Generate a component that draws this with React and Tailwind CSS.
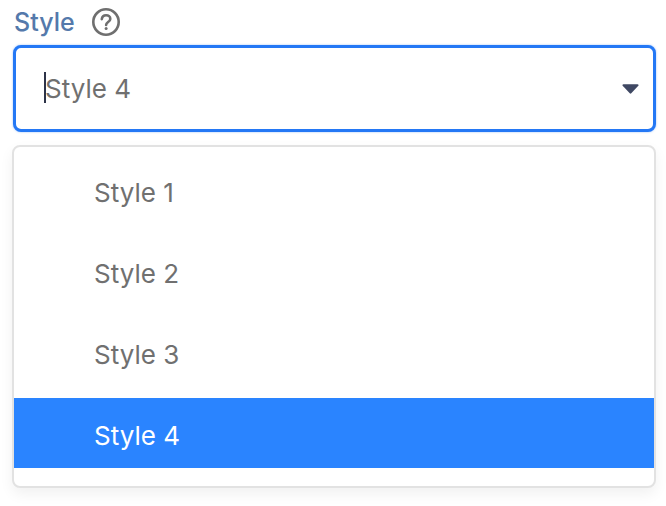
import React from "react";

const options = ["Style 1", "Style 2", "Style 3", "Style 4"];

export default function App() {
  return (
    <div className="w-[666px] h-[506px] overflow-hidden bg-white font-['Inter',sans-serif] px-[13px] pt-[6px]">
      <div className="flex items-center h-[33px]">
        <span className="w-[62px] pl-[1px] text-[25px] leading-[33px] font-medium text-[#5479ab]">Style</span>
        <svg className="ml-[16px] -mt-[1px]" width="30" height="30" viewBox="0 0 30 30" fill="none" stroke="#6f6f6f" strokeWidth="2.6">
          <circle cx="15" cy="15" r="12.7" />
          <path d="M10.8 12.2c.3-2.4 2-3.9 4.3-3.9 2.4 0 4.2 1.5 4.2 3.6 0 3-4.2 3.2-4.2 6" strokeLinecap="round" />
          <circle cx="15.1" cy="21.4" r="1.5" fill="#6f6f6f" stroke="none" />
        </svg>
      </div>

      <div className="mt-[6px] h-[87px] w-[643px] rounded-[8px] border-[3px] border-[#2478f5] bg-white flex items-center pl-[29px] pr-[14px] shadow-[0_0_2px_rgba(36,120,245,0.5)]">
        <div className="relative text-[26px] leading-[33px] text-[#707070]">
          <span className="absolute left-[-1px] top-[0px] w-[2px] h-[31px] bg-[#2d3348]" />
          Style 4
        </div>
        <svg className="ml-auto" width="17" height="12" viewBox="0 0 18 12">
          <path d="M1.5 1h15c.9 0 1.3.9.8 1.5l-7.5 8a1.1 1.1 0 0 1-1.6 0l-7.5-8C.2 1.9.6 1 1.5 1z" fill="#3f4863" />
        </svg>
      </div>

      <div className="mt-[13px] -ml-[1px] w-[644px] h-[343px] rounded-[8px] border-2 border-[#e2e2e2] bg-white overflow-hidden shadow-[0_6px_14px_rgba(0,0,0,0.06)] pt-[8px]">
        {options.map((option) =>
          option === "Style 4" ? (
            <div key={option} className="h-[70px] flex items-center pl-[80px] pt-[4px] text-[26px] bg-[#2a84ff] text-white">
              {option}
            </div>
          ) : (
            <div key={option} className="h-[81px] flex items-center pl-[80px] pb-[6px] text-[26px] text-[#707070]">
              {option}
            </div>
          )
        )}
      </div>
    </div>
  );
}
